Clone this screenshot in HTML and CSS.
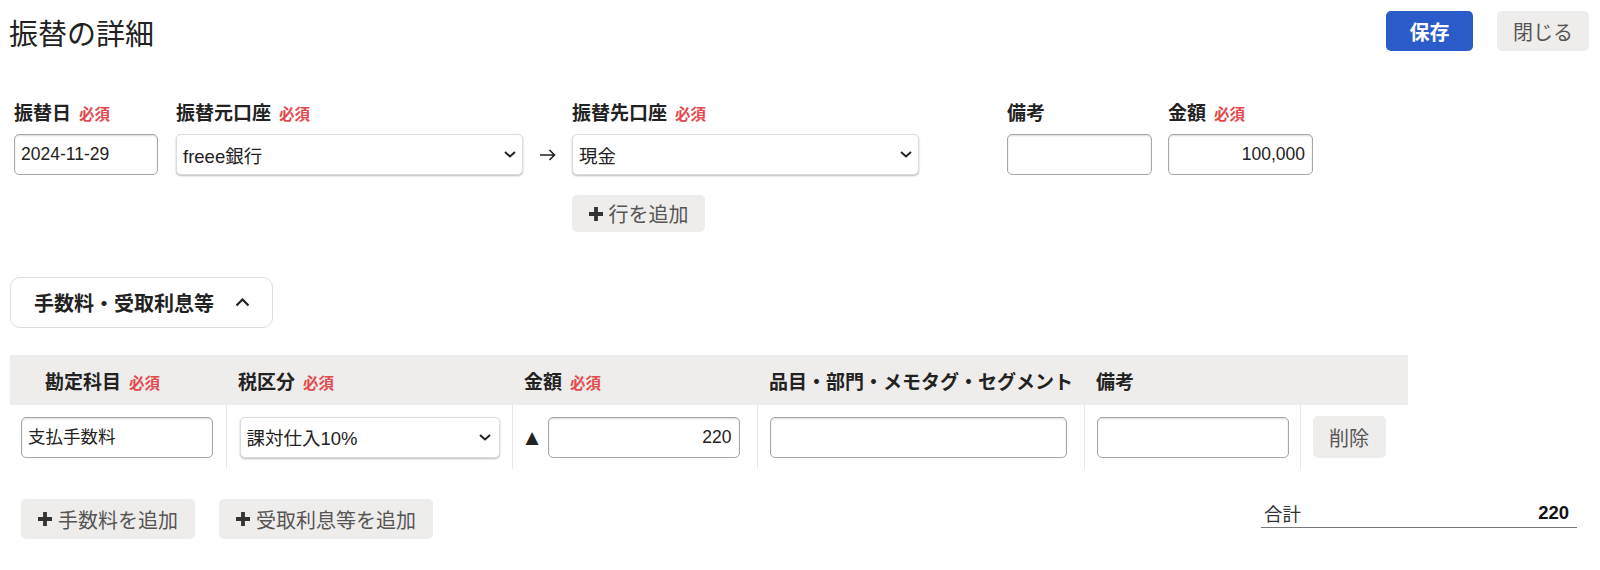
FILE: index.html
```html
<!DOCTYPE html>
<html lang="ja">
<head>
<meta charset="utf-8">
<title>振替の詳細</title>
<link rel="stylesheet" href="styles.css">
</head>
<body>
<header class="top">
  <h1 class="title">振替の詳細</h1>
  <div class="actions">
    <button class="btn btn-primary">保存</button>
    <button class="btn btn-gray btn-close">閉じる</button>
  </div>
</header>

<section class="transfer">
  <div class="field f-date">
    <div class="lbl">振替日<span class="req">必須</span></div>
    <div class="inp">2024-11-29</div>
  </div>
  <div class="field f-from">
    <div class="lbl">振替元口座<span class="req">必須</span></div>
    <div class="sel"><span>freee銀行</span><svg class="chev" viewBox="0 0 12 7"><path d="M1 1l5 4.5L11 1"/></svg></div>
  </div>
  <div class="arrow"><svg viewBox="0 0 17 12"><path d="M1 6h14.5M10.5 1 15.5 6l-5 5"/></svg></div>
  <div class="field f-to">
    <div class="lbl">振替先口座<span class="req">必須</span></div>
    <div class="sel"><span>現金</span><svg class="chev" viewBox="0 0 12 7"><path d="M1 1l5 4.5L11 1"/></svg></div>
    <button class="btn btn-gray btn-add add-row"><svg class="plus" viewBox="0 0 14 14"><path d="M5.1 0h3.8v5.1H14v3.8H8.9V14H5.1V8.9H0V5.1h5.1z"/></svg>行を追加</button>
  </div>
  <div class="field f-memo">
    <div class="lbl">備考</div>
    <div class="inp"></div>
  </div>
  <div class="field f-amount">
    <div class="lbl">金額<span class="req">必須</span></div>
    <div class="inp num">100,000</div>
  </div>
</section>

<div class="accordion">
  <span class="acc-title">手数料・受取利息等</span>
  <svg class="acc-chev" viewBox="0 0 15 9"><path d="M1.5 7.5 7.5 1.5l6 6"/></svg>
</div>

<table class="fees">
  <colgroup>
    <col class="c1"><col class="c2"><col class="c3"><col class="c4"><col class="c5"><col class="c6">
  </colgroup>
  <thead>
    <tr>
      <th class="th-first">勘定科目<span class="req">必須</span></th>
      <th>税区分<span class="req">必須</span></th>
      <th>金額<span class="req">必須</span></th>
      <th>品目・部門・メモタグ・セグメント</th>
      <th>備考</th>
      <th></th>
    </tr>
  </thead>
  <tbody>
    <tr>
      <td class="td-first"><div class="inp inp-acct">支払手数料</div></td>
      <td class="td-tax"><div class="sel sel-tax"><span>課対仕入10%</span><svg class="chev" viewBox="0 0 12 7"><path d="M1 1l5 4.5L11 1"/></svg></div></td>
      <td class="td-amt"><div class="amt"><span class="tri">▲</span><div class="inp num inp-amt">220</div></div></td>
      <td><div class="inp inp-item"></div></td>
      <td><div class="inp inp-memo"></div></td>
      <td><button class="btn btn-gray btn-del">削除</button></td>
    </tr>
  </tbody>
</table>

<footer class="bottom">
  <div class="bottom-btns">
    <button class="btn btn-gray btn-add btn-fee"><svg class="plus" viewBox="0 0 14 14"><path d="M5.1 0h3.8v5.1H14v3.8H8.9V14H5.1V8.9H0V5.1h5.1z"/></svg>手数料を追加</button>
    <button class="btn btn-gray btn-add btn-int"><svg class="plus" viewBox="0 0 14 14"><path d="M5.1 0h3.8v5.1H14v3.8H8.9V14H5.1V8.9H0V5.1h5.1z"/></svg>受取利息等を追加</button>
  </div>
  <div class="total">
    <span class="total-label">合計</span>
    <span class="total-value">220</span>
  </div>
</footer>
</body>
</html>
```

FILE: styles.css
```css
* { box-sizing: border-box; }
body {
  margin: 0;
  background: #fff;
  color: #222;
  font-family: "Liberation Sans", "Noto Sans CJK JP", sans-serif;
}
.top {
  display: flex;
  justify-content: space-between;
  align-items: flex-start;
  padding: 11px 11px 0 9px;
  height: 51px;
}
.title {
  margin: 4px 0 0 0;
  font-size: 29px;
  font-weight: normal;
  line-height: 40px;
  color: #222;
}
.actions { display: flex; gap: 24px; }
.btn {
  font-family: inherit;
  border: none;
  border-radius: 5px;
  cursor: pointer;
  display: inline-flex;
  align-items: center;
  justify-content: center;
  padding: 0;
}
.btn-primary {
  width: 87px;
  height: 40px;
  background: #2a5bc8;
  color: #fff;
  font-weight: bold;
  font-size: 20px;
}
.btn-gray {
  background: #efedeb;
  color: #555;
  font-size: 20px;
}
.btn-close { width: 92px; height: 40px; }

.transfer {
  display: flex;
  align-items: flex-start;
  margin-top: 51px;
  padding-left: 14px;
}
.field { display: flex; flex-direction: column; }
.lbl {
  height: 24px;
  line-height: 24px;
  margin-bottom: 8px;
  font-size: 19px;
  font-weight: bold;
  color: #222;
  white-space: nowrap;
}
.req {
  color: #e24a50;
  font-size: 15.5px;
  font-weight: bold;
  margin-left: 8px;
}
.inp {
  height: 41px;
  border: 1px solid #a6a6a6;
  border-radius: 5px;
  box-shadow: inset 0 1px 2px rgba(0,0,0,0.14);
  background: #fff;
  font-size: 17.5px;
  line-height: 39px;
  padding: 0 7px 0 6px;
  color: #222;
  white-space: nowrap;
}
.num { text-align: right; }
.sel {
  height: 41px;
  border: 1px solid #dcdcdc;
  border-radius: 5px;
  box-shadow: 0 1px 2px rgba(0,0,0,0.28);
  background: #fff;
  font-size: 18.5px;
  padding: 0 6px 0 6px;
  display: flex;
  align-items: center;
  justify-content: space-between;
  color: #222;
}
.chev {
  width: 12px;
  height: 7px;
  fill: none;
  stroke: #222;
  stroke-width: 2;
}
.f-date { width: 144px; margin-right: 18px; }
.f-from { width: 347px; }
.arrow {
  width: 49px;
  height: 41px;
  margin-top: 32px;
  display: flex;
  align-items: center;
  justify-content: center;
}
.arrow svg {
  width: 17px;
  height: 12px;
  fill: none;
  stroke: #222;
  stroke-width: 1.6;
}
.f-to { width: 347px; margin-right: 88px; }
.add-row { margin-top: 20px; width: 133px; height: 37px; align-self: flex-start; }
.btn-add { gap: 6px; }
.plus { width: 14px; height: 14px; fill: #333; }
.f-memo { width: 145px; margin-right: 16px; }
.f-amount { width: 145px; }

.accordion {
  margin: 45px 0 0 10px;
  width: 263px;
  height: 51px;
  border: 1px solid #dedede;
  border-radius: 10px;
  display: flex;
  align-items: center;
  padding-left: 23px;
}
.acc-title { font-size: 20px; font-weight: bold; color: #222; }
.acc-chev {
  width: 15px;
  height: 9px;
  margin-left: 21px;
  fill: none;
  stroke: #222;
  stroke-width: 2.2;
}

.fees {
  margin: 27px 0 0 10px;
  border-collapse: collapse;
  table-layout: fixed;
  width: 1398px;
}
.c1 { width: 216px; }
.c2 { width: 286px; }
.c3 { width: 245px; }
.c4 { width: 327px; }
.c5 { width: 216px; }
.c6 { width: 108px; }
.fees th {
  background: #efedeb;
  height: 50px;
  text-align: left;
  padding: 0 0 0 12px;
  font-size: 19px;
  font-weight: bold;
  color: #222;
  white-space: nowrap;
}
.fees th.th-first { padding-left: 35px; }
.fees td {
  height: 64px;
  padding: 0 0 0 12px;
  border-left: 1px solid #e8e8e8;
  vertical-align: middle;
}
.fees td.td-first { border-left: none; padding-left: 11px; }
.fees td.td-tax { padding-left: 13px; }
.fees td.td-amt { padding-left: 13px; }
.inp-acct { width: 192px; }
.sel-tax { width: 260px; }
.sel-tax .chev { margin-right: 2px; }
.amt { display: flex; align-items: center; }
.tri {
  font-family: "DejaVu Sans", sans-serif;
  font-size: 17px;
  width: 22px;
  color: #222;
}
.inp-amt { width: 192px; }
.inp-item { width: 297px; }
.inp-memo { width: 192px; }
.btn-del { width: 73px; height: 42px; }

.bottom {
  display: flex;
  justify-content: space-between;
  align-items: flex-start;
  margin-top: 30px;
  padding: 0 23px 0 21px;
}
.bottom-btns { display: flex; gap: 24px; }
.bottom-btns .btn { height: 40px; }
.btn-fee { width: 174px; }
.btn-int { width: 214px; }
.total {
  width: 316px;
  height: 29px;
  border-bottom: 1px solid #777;
  display: flex;
  justify-content: space-between;
  align-items: center;
  padding: 0 8px 0 3px;
}
.total-label { font-size: 18.5px; color: #333; }
.total-value { font-size: 18.5px; font-weight: bold; color: #111; }
```
